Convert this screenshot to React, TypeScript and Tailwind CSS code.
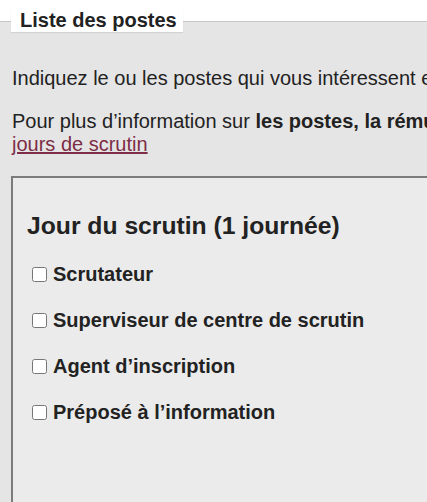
export default function App() {
  const postes = [
    "Scrutateur",
    "Superviseur de centre de scrutin",
    "Agent d’inscription",
    "Préposé à l’information",
  ];

  return (
    <div className="relative h-[502px] overflow-hidden bg-white font-['Liberation_Sans',Arial,sans-serif] text-[#222]">
      <div className="mt-[21px] h-[481px] border-t border-[#c6c6c6] bg-[#e5e5e5]">
        <p className="ml-[12px] pt-[45px] whitespace-nowrap text-[20px] leading-[23px]">
          Indiquez le ou les postes qui vous intéressent en cochant les cases correspondantes.
        </p>

        <p className="ml-[12px] mt-[20px] whitespace-nowrap text-[20px] leading-[23px]">
          Pour plus d’information sur{" "}
          <strong className="font-bold">les postes, la rémunération et les horaires de travail</strong>, consultez la page Travailler les
          <br />
          <a href="#" className="text-[#7d2d45] underline">
            jours de scrutin
          </a>
        </p>

        <div className="ml-[11px] mt-[20px] h-[400px] w-[520px] border-l-2 border-t-2 border-[#7b7b7b] bg-[#ebebeb] pl-[14px] pt-[33px]">
          <h2 className="text-[24.7px] font-bold leading-[30px]">Jour du scrutin (1 journée)</h2>

          <div className="mt-[21px] flex flex-col gap-[22px]">
            {postes.map((p) => (
              <label key={p} className="flex h-[24px] items-center text-[20px] font-bold leading-[24px]">
                <input type="checkbox" className="ml-[5px] mr-[6px] h-[15px] w-[15px]" />
                {p}
              </label>
            ))}
          </div>
        </div>
      </div>

      <div className="absolute left-[11px] top-[8px] h-[24px] bg-white pl-[9px] pr-[6px] text-[20px] font-bold leading-[24px] shadow-[0_1px_1px_rgba(0,0,0,0.08)]">
        Liste des postes
      </div>
    </div>
  );
}
